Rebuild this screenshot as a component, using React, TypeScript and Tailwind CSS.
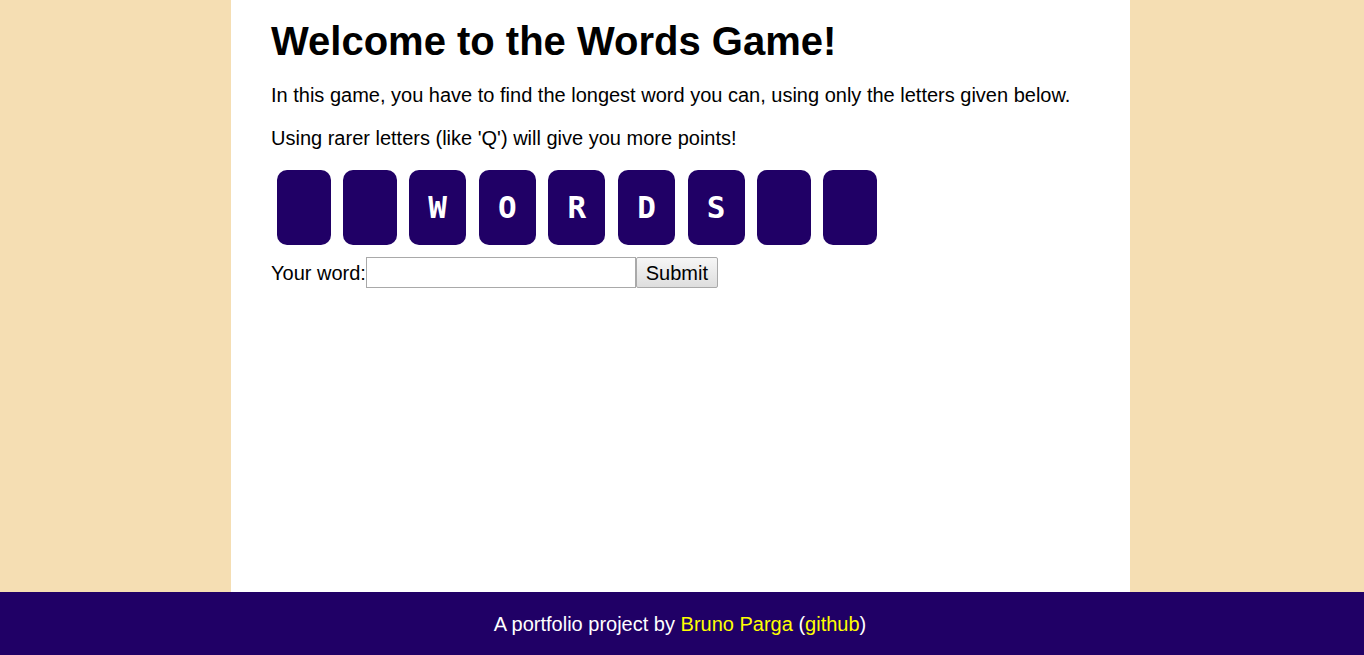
const letters = ["", "", "W", "O", "R", "D", "S", "", ""];

const Tile = ({ letter }: { letter: string }) => {
  return (
    <div
      className={`h-[75px] rounded-[10px] bg-[#200066] flex items-center justify-center text-white font-bold text-[31px] font-['DejaVu_Sans_Mono',monospace] ${
        letter ? "w-[57px]" : "w-[53.5px]"
      }`}
    >
      {letter}
    </div>
  );
};

export default function App() {
  return (
    <div className="min-h-screen flex flex-col bg-[#f5deb3] font-['Liberation_Sans',Arial,sans-serif] text-black">
      <main className="flex-1 w-[899px] ml-[231px] bg-white px-10 pt-[18px]">
        <h1 className="text-[40px] font-bold leading-[46px]">Welcome to the Words Game!</h1>
        <p className="text-[20px] leading-[23px] mt-[20px]">
          In this game, you have to find the longest word you can, using only the letters given below.
        </p>
        <p className="text-[20px] leading-[23px] mt-[20px]">
          Using rarer letters (like 'Q') will give you more points!
        </p>
        <div className="flex gap-[12.6px] ml-[6px] mt-[20px]">
          {letters.map((l, i) => (
            <Tile key={i} letter={l} />
          ))}
        </div>
        <form className="flex items-center mt-[12px] text-[20px]" onSubmit={(e) => e.preventDefault()}>
          <label htmlFor="word">Your word:</label>
          <input
            id="word"
            type="text"
            className="w-[270px] h-[31px] border border-[#a9a9a9] bg-white px-1 outline-none"
          />
          <button
            type="submit"
            className="w-[82px] h-[31px] border border-[#a9a9a9] rounded-[2px] bg-gradient-to-b from-[#f6f6f6] to-[#dedede] text-[20px]"
          >
            Submit
          </button>
        </form>
      </main>
      <footer className="h-[63px] bg-[#200066] text-white text-[20px] flex items-center justify-center pr-[4px]">
        <span>
          A portfolio project by <a className="text-[#ffff00]">Bruno Parga</a> (
          <a className="text-[#ffff00]">github</a>)
        </span>
      </footer>
    </div>
  );
}
